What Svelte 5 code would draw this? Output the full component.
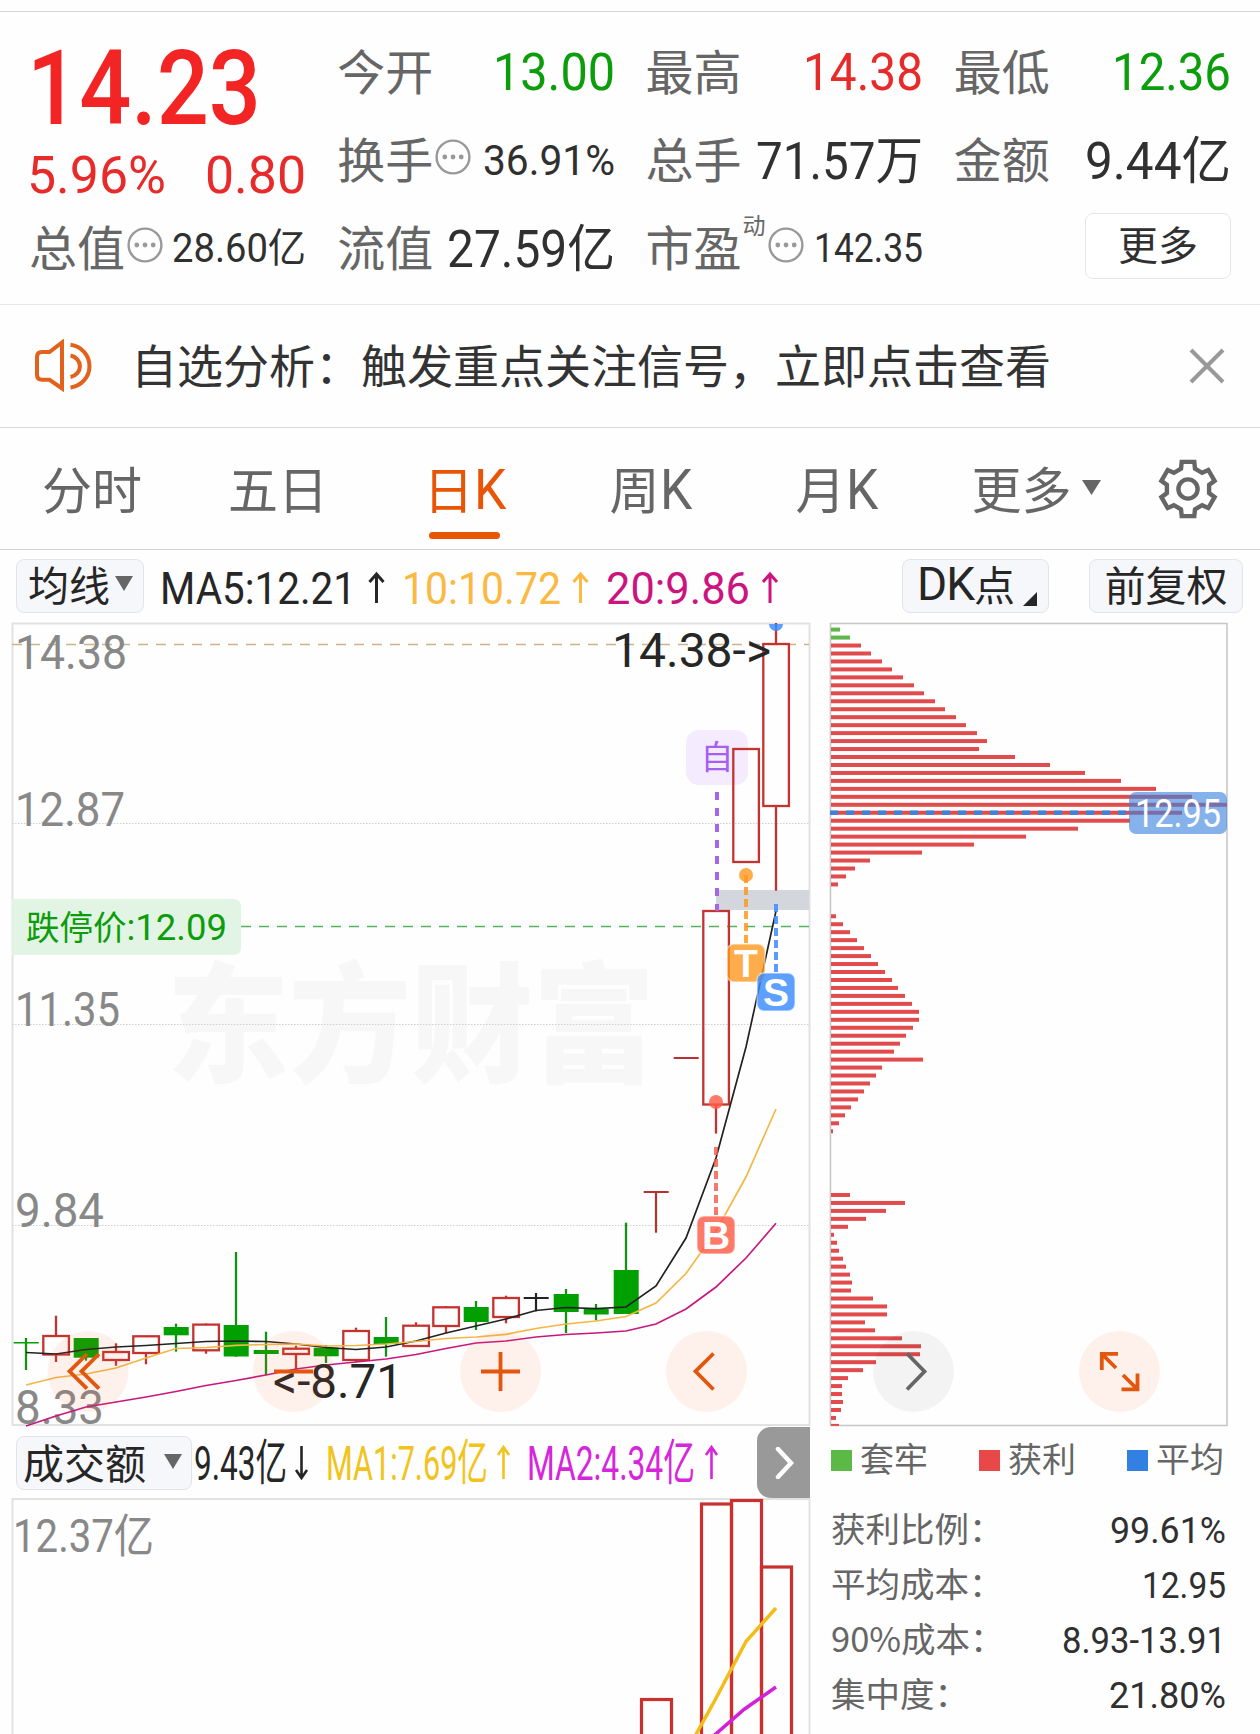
<script lang="ts">
	type Quote = {
		label: string;
		text: string;
		width: number;
		size: number;
		tone: string;
		tip?: boolean;
		sup?: string;
	};

	type Candle = { x: number; top: number; bottom: number; high: number; low: number; kind: string };

	const quotes: Quote[] = [
		{ label: '今开', text: '13.00', width: 122, size: 52, tone: 'down' },
		{ label: '最高', text: '14.38', width: 120, size: 52, tone: 'up' },
		{ label: '最低', text: '12.36', width: 119, size: 52, tone: 'down' },
		{ label: '换手', text: '36.91%', width: 132, size: 42, tone: 'flat', tip: true },
		{ label: '总手', text: '71.57万', width: 167, size: 51, tone: 'flat' },
		{ label: '金额', text: '9.44亿', width: 146, size: 51, tone: 'flat' },
		{ label: '总值', text: '28.60亿', width: 134, size: 40, tone: 'flat', tip: true },
		{ label: '流值', text: '27.59亿', width: 168, size: 51, tone: 'flat strong' },
		{ label: '市盈', text: '142.35', width: 109, size: 40, tone: 'flat', tip: true, sup: '动' }
	];

	const tabs = [
		{ text: '分时', k: '' },
		{ text: '五日', k: '' },
		{ text: '日', k: 'K', active: true },
		{ text: '周', k: 'K' },
		{ text: '月', k: 'K' }
	];

	const axis = [
		{ text: '14.38', y: 668.5, width: 112 },
		{ text: '12.87', y: 826, width: 110 },
		{ text: '11.35', y: 1025.5, width: 105 },
		{ text: '9.84', y: 1227, width: 89 },
		{ text: '8.33', y: 1423.5, width: 89 }
	];

	// x, body top, body bottom, high, low, kind
	const candles: Candle[] = (
		[
			[26, 1342, 1343.5, 1338, 1370, 'fall'],
			[56, 1336, 1354.5, 1315.7, 1362, 'rise'],
			[86, 1338, 1357.7, 1338, 1360.7, 'fall'],
			[116, 1352, 1360, 1343.3, 1365.7, 'rise'],
			[146, 1336.3, 1353, 1336, 1364.3, 'rise'],
			[176, 1327, 1335.3, 1323.7, 1351.7, 'fall'],
			[206, 1324.6, 1350.3, 1323.5, 1353.7, 'rise'],
			[236, 1325, 1356.5, 1252, 1356.7, 'fall'],
			[266, 1350, 1354, 1331.7, 1375, 'fall'],
			[296, 1348.7, 1354, 1345.7, 1370.7, 'rise'],
			[326, 1347.7, 1356.3, 1345, 1363, 'fall'],
			[356, 1331, 1360, 1327.7, 1362, 'rise'],
			[386, 1337, 1344, 1317, 1356.7, 'fall'],
			[416, 1325.7, 1346, 1322.3, 1346, 'rise'],
			[446, 1307.3, 1326, 1306, 1333, 'rise'],
			[476, 1307, 1322, 1301, 1330, 'fall'],
			[506, 1298, 1317, 1295.7, 1323.3, 'rise'],
			[536, 1297, 1299, 1293, 1311.3, 'even'],
			[566, 1294, 1312, 1289, 1333, 'fall'],
			[596, 1309, 1314.5, 1304, 1320.3, 'fall'],
			[626, 1270, 1314, 1222.7, 1314, 'fall'],
			[656, 1191, 1193, 1192, 1232.7, 'line'],
			[686, 1057, 1059, 1058, 1058, 'line'],
			[716, 911, 1104.5, 911, 1133.6, 'rise'],
			[746, 749, 862, 749, 862, 'rise'],
			[776, 644, 806, 623, 890.7, 'rise']
		] as [number, number, number, number, number, string][]
	).map(([x, top, bottom, high, low, kind]) => ({ x, top, bottom, high, low, kind }));

	const ma5 = [
		1352.5, 1354, 1349.5, 1347, 1345.5, 1343.5, 1341.5, 1341, 1341.5, 1344, 1347.5, 1349.5, 1347,
		1341, 1333, 1326, 1319, 1310.5, 1307.5, 1308.7, 1307, 1286, 1238, 1158, 1047, 911
	];
	const ma10 = [
		1385, 1377.5, 1374, 1368, 1358, 1348.5, 1347.5, 1345.3, 1344.5, 1344, 1346, 1345.5, 1344,
		1341.5, 1338.5, 1337, 1334.3, 1328.5, 1324, 1321, 1316.5, 1303, 1273.5, 1231, 1177, 1109
	];
	const ma20 = [
		1426, 1416, 1407, 1402, 1397, 1391.5, 1385.5, 1380.5, 1375, 1369, 1365, 1362, 1359, 1354.5,
		1348.5, 1343, 1341, 1337, 1334.5, 1333, 1331, 1324, 1309, 1287, 1258, 1223.3
	];

	// chip distribution, one bar per price level, top to bottom
	const chips = [
		9, 19, 30, 40, 51, 61, 72, 83, 93, 104, 114, 125, 135, 146, 156, 148, 184, 219, 254, 290, 325,
		361, 396, 351, 299, 247, 195, 143, 91, 39, 24, 15, 7, 0, 0, 0, 5, 12, 19, 26, 33, 40, 47, 54,
		61, 67, 74, 81, 88, 88, 82, 75, 69, 63, 92, 51, 45, 39, 33, 27, 20, 14, 8, 2, 0, 0, 0, 0, 0,
		0, 0, 19, 74, 55, 35, 17, 3, 6, 8, 12, 15, 19, 21, 20, 42, 56, 56, 34, 44, 71, 90, 89, 45, 32,
		17, 11, 11, 12, 10, 5, 8
	];

	const volumes = [
		{ x: 656, y: 1699.5 },
		{ x: 716, y: 1504 },
		{ x: 746, y: 1500.5 },
		{ x: 776, y: 1567 }
	];

	const legend = [
		{ text: '套牢', kind: 'stuck' },
		{ text: '获利', kind: 'profit' },
		{ text: '平均', kind: 'mean' }
	];

	const stats = [
		{ label: '获利比例：', text: '99.61%', width: 116 },
		{ label: '平均成本：', text: '12.95', width: 84 },
		{ label: '90%成本：', text: '8.93-13.91', width: 164 },
		{ label: '集中度：', text: '21.80%', width: 117 }
	];

	function trace(values: number[]) {
		return values.map((y, i) => `${26 + i * 30},${y}`).join(' ');
	}

	function gearPoints() {
		const out: string[] = [];
		for (let i = 0; i < 6; i++) {
			for (const [r, d] of [[21.5, -19], [27.8, -13], [27.8, 13], [21.5, 19]]) {
				const a = ((i * 60 - 90 + d) * Math.PI) / 180;
				out.push(`${(r * Math.cos(a)).toFixed(1)},${(r * Math.sin(a)).toFixed(1)}`);
			}
		}
		return out.join(' ');
	}
</script>

{#snippet figure(text: string, width: number, size: number, tone: string)}
	<svg class="figure {tone}" {width} height={size}>
		<text x="0" y={size * 0.855} font-size={size} textLength={width} lengthAdjust="spacingAndGlyphs">{text}</text>
	</svg>
{/snippet}

{#snippet quote(q: Quote)}
	<div class="quote">
		<span class="label">{q.label}</span>
		{#if q.sup}<span class="sup">{q.sup}</span>{/if}
		{#if q.tip}
			<svg class="tip" width="36" height="36" viewBox="0 0 36 36">
				<circle cx="18" cy="18" r="16.4" />
				<circle class="dot" cx="9.8" cy="18" r="2.4" />
				<circle class="dot" cx="18" cy="18" r="2.4" />
				<circle class="dot" cx="26.2" cy="18" r="2.4" />
			</svg>
		{/if}
		<span class="value">{@render figure(q.text, q.width, q.size, q.tone)}</span>
	</div>
{/snippet}

{#snippet badge(x: number, y: number, letter: string, kind: string)}
	<g class="badge {kind}">
		<rect x={x - 19} {y} width="38" height="38" rx="7" />
		<text {x} y={y + 32.5} text-anchor="middle">{letter}</text>
	</g>
{/snippet}

<main>
	<div class="strip"></div>

	<header>
		<div class="price">
			{@render figure('14.23', 234, 104, 'up big')}
			<div class="change">
				{@render figure('5.96%', 139, 52, 'up')}
				{@render figure('0.80', 101, 52, 'up')}
			</div>
		</div>
		{#each quotes as q}
			{@render quote(q)}
		{/each}
		<div class="quote more"><button>更多</button></div>
	</header>

	<div class="notice">
		<svg class="speaker" width="62" height="54" viewBox="33 338 62 54">
			<path d="M62 341.500V387.500L49.500 378.800H42Q37 378.800 37 373.500V356Q37 351 42 351H49.500Z" />
			<path d="M70.500 354.500A12 11 0 0 1 70.500 376M70.500 343.800A21.500 21.500 0 0 1 70.500 386.500" />
		</svg>
		<span class="message">自选分析：触发重点关注信号，立即点击查看</span>
		<svg class="close" width="36" height="36" viewBox="0 0 36 36">
			<path d="M2 2L34 34M34 2L2 34" />
		</svg>
	</div>

	<nav>
		{#each tabs as tab}
			<div class="tab" class:active={tab.active}>
				<span>{tab.text}{#if tab.k}<span class="k">{tab.k}</span>{/if}</span>
			</div>
		{/each}
		<div class="tab wide">
			<span>更多</span>
			<svg width="19" height="15"><path d="M0 0H19L9.500 15Z" /></svg>
		</div>
		<svg class="gear" width="62" height="62" viewBox="-31 -31 62 62">
			<polygon points={gearPoints()} />
			<circle r="9.6" />
		</svg>
	</nav>

	<div class="bar">
		<button class="chip-btn average">均线<svg width="18" height="15"><path d="M0 0H18L9 15Z" /></svg></button>
		<svg class="readout" width="640" height="56" viewBox="160 557 640 56">
			<g class="c-ma5">
				<text x="160" y="602.500" textLength="196" lengthAdjust="spacingAndGlyphs">MA5:12.21</text>
				<path d="M376.500 602V573M369.500 581L376.500 573L383.500 581" />
			</g>
			<g class="c-ma10">
				<text x="402" y="602.500" textLength="159" lengthAdjust="spacingAndGlyphs">10:10.72</text>
				<path d="M580.500 602V573M573.500 581L580.500 573L587.500 581" />
			</g>
			<g class="c-ma20">
				<text x="606" y="602.500" textLength="144" lengthAdjust="spacingAndGlyphs">20:9.86</text>
				<path d="M770 602V573M763 581L770 573L777 581" />
			</g>
		</svg>
		<button class="chip-btn dk"><span class="latin">DK</span>点<svg width="14" height="14"><path d="M14 0V14H0Z" /></svg></button>
		<button class="chip-btn adjust">前复权</button>
	</div>

	<section class="charts">
		<svg class="kline" width="820" height="805" viewBox="0 622 820 805">
			<rect class="frame" x="12.500" y="623.500" width="797" height="801.500" />
			<text class="watermark" x="167" y="1072" textLength="488" lengthAdjust="spacingAndGlyphs">东方财富</text>
			{#each [823.5, 1024.5, 1225.5] as y}
				<line class="grid" x1="12" x2="809" y1={y} y2={y} />
			{/each}
			<line class="top-line" x1="12" x2="809" y1="644.500" y2="644.500" />
			<rect class="gap" x="716" y="890" width="93" height="20" />
			<line class="limit-line" x1="241" x2="809" y1="926.500" y2="926.500" />
			<path class="limit-box" d="M12 899H233Q241 899 241 907V947Q241 955 233 955H12Z" />
			<text class="limit-text" x="26" y="940" textLength="201" lengthAdjust="spacingAndGlyphs"><tspan class="cn">跌停价</tspan>:12.09</text>

			{#each axis as a}
				<text class="axis" x="15" y={a.y} textLength={a.width} lengthAdjust="spacingAndGlyphs">{a.text}</text>
			{/each}

			<rect class="watch-box" x="686" y="730" width="62" height="55" rx="13" />
			<text class="watch" x="717" y="769" text-anchor="middle">自</text>

			{#each candles as c}
				<g class={c.kind}>
					{#if c.kind === 'rise'}
						<line x1={c.x} x2={c.x} y1={c.high} y2={c.top} />
						<line x1={c.x} x2={c.x} y1={c.bottom} y2={c.low} />
						<rect x={c.x - 12.7} y={c.top} width="25.600" height={c.bottom - c.top} />
					{:else}
						<line x1={c.x} x2={c.x} y1={c.high} y2={c.low} />
						<rect x={c.x - 12.3} y={c.top} width="25" height={c.bottom - c.top} />
					{/if}
				</g>
			{/each}

			<polyline class="ma ma5" points={trace(ma5)} />
			<polyline class="ma ma10" points={trace(ma10)} />
			<polyline class="ma ma20" points={trace(ma20)} />

			<line class="mark watch-line" x1="717" x2="717" y1="792" y2="911" />
			<path class="mark-s" d="M769 624A7 7 0 0 0 783 624Z" />
			<circle class="mark-t" cx="746" cy="875" r="7" />
			<line class="mark-t mark" x1="746" x2="746" y1="875" y2="943" />
			<line class="mark-s mark" x1="776" x2="776" y1="904" y2="972" />
			<circle class="mark-b" cx="716" cy="1102" r="7" />
			<line class="mark-b mark" x1="716" x2="716" y1="1147" y2="1215" />
			{@render badge(746, 944, 'T', 'mark-t')}
			{@render badge(776, 973, 'S', 'mark-s')}
			{@render badge(716, 1216, 'B', 'mark-b')}

			<text class="extreme" x="612" y="667" textLength="159" lengthAdjust="spacingAndGlyphs">14.38-&gt;</text>
			<text class="extreme" x="273" y="1398" textLength="130" lengthAdjust="spacingAndGlyphs">&lt;-8.71</text>
		</svg>

		<svg class="chips" width="440" height="805" viewBox="820 622 440 805">
			<rect class="chip-frame" x="830.500" y="623.500" width="396.500" height="802" />
			{#each chips as w, i}
				<rect class={i < 2 ? 'stuck' : 'profit'} x="831" y={627.6 + i * 7.963} width={w} height={i === 100 ? 2 : 4} />
			{/each}
			<line class="mean-line" x1="830" x2="1129" y1="812.700" y2="812.700" />
			<rect class="mean-box" x="1129" y="792" width="98" height="42" rx="7" />
			<text class="mean-text" x="1135" y="827" textLength="86" lengthAdjust="spacingAndGlyphs">12.95</text>
		</svg>

		<svg class="tools" width="1260" height="805" viewBox="0 622 1260 805">
			{#each [88, 293.5, 500.5, 706.5, 1119.5] as cx}
				<circle {cx} cy="1371.500" r="40.500" />
			{/each}
			<circle class="off" cx="913.500" cy="1371.500" r="40.500" />
			<path d="M87 1354L69.500 1371.300L87 1388.600M99 1354L81.500 1371.300L99 1388.600" />
			<path d="M274 1371.500H313M481 1371.500H520M500.500 1352V1391" />
			<path d="M713.500 1353.500L695.500 1371.300L713.500 1389.500" />
			<path class="off" d="M907 1353.500L924.500 1371.500L907 1389.500" />
			<path d="M1118 1353.800H1101.800V1370M1101.800 1353.800L1116 1368M1121.500 1389.300H1137.500V1373.500M1137.500 1389.300L1123 1375" />
		</svg>
	</section>

	<div class="lower">
		<section class="volume">
			<div class="vol-head">
				<button class="chip-btn amount">成交额<svg width="18" height="15"><path d="M0 0H18L9 15Z" /></svg></button>
				<svg class="readout vol" width="564" height="72" viewBox="193 1427 564 72">
					<g class="c-ma5">
						<text x="194" y="1480" textLength="93" lengthAdjust="spacingAndGlyphs">9.43亿</text>
						<path d="M301.500 1446V1478M296 1470L301.500 1478L307 1470" />
					</g>
					<g class="c-vol1">
						<text x="326" y="1480" textLength="162" lengthAdjust="spacingAndGlyphs">MA1:7.69亿</text>
						<path d="M503.500 1479V1447M498 1455L503.500 1447L509 1455" />
					</g>
					<g class="c-vol2">
						<text x="527" y="1480" textLength="168" lengthAdjust="spacingAndGlyphs">MA2:4.34亿</text>
						<path d="M711.500 1479V1447M706 1455L711.500 1447L717 1455" />
					</g>
				</svg>
				<button class="next"><svg width="20" height="32"><path d="M4 2L17 16L4 30" /></svg></button>
			</div>
			<svg class="vol-chart" width="820" height="236" viewBox="0 1498 820 236">
				<path class="frame" d="M12.500 1740V1499H809.500V1740" />
				<text class="axis vol-axis" x="13" y="1552" textLength="141" lengthAdjust="spacingAndGlyphs">12.37亿</text>
				{#each volumes as v}
					<rect class="vol-bar" x={v.x - 14.5} y={v.y} width="30" height="260" />
				{/each}
				<polyline class="v1" points="776,1608 746,1641.500 714,1702 694,1738" />
				<polyline class="v2" points="776,1687 744,1709.500 710,1739" />
			</svg>
		</section>

		<aside>
			<div class="legend">
				{#each legend as item}
					<span class="key"><i class={item.kind}></i><span>{item.text}</span></span>
				{/each}
			</div>
			{#each stats as s}
				<div class="stat">
					<span>{s.label}</span>
					{@render figure(s.text, s.width, 37, 'flat')}
				</div>
			{/each}
		</aside>
	</div>
</main>

<style>
	:global(body) {
		margin: 0;
		background: #fff;
	}

	main {
		width: 1260px;
		height: 1734px;
		overflow: hidden;
		background: #fefefe;
		color: #666;
		font-family: 'Noto Sans CJK SC', sans-serif;
	}

	main * {
		box-sizing: border-box;
	}

	svg {
		display: block;
		flex-shrink: 0;
	}

	text {
		font-family: Roboto, 'Noto Sans CJK SC', sans-serif;
	}

	button {
		padding: 0;
		font-family: inherit;
		line-height: 1;
	}

	.strip {
		height: 12px;
		border-bottom: 1px solid #d6d8d8;
	}

	header {
		display: grid;
		grid-template-columns: repeat(4, 1fr);
		grid-template-rows: repeat(3, 88px);
		column-gap: 31px;
		height: 293px;
		padding: 16px 29px 0 29px;
		border-bottom: 1px solid #e8e8e8;
	}

	.price {
		grid-row: span 2;
		padding-top: 7px;
		margin-left: -2px;
	}

	.change {
		display: flex;
		justify-content: space-between;
		margin-top: 10px;
	}

	.figure,
	.readout,
	.kline {
		overflow: visible;
	}

	.up {
		fill: #e72a2a;
	}

	.big {
		fill: #f32424;
		font-weight: 500;
	}

	.down {
		fill: #0b9d0b;
	}

	.flat {
		fill: #303030;
	}

	.quote {
		display: flex;
		align-items: center;
	}

	.label {
		padding-bottom: 5px;
		font-size: 48px;
		line-height: 83px;
	}

	.value {
		margin-left: auto;
	}

	.sup {
		align-self: flex-start;
		margin: 6px 0 0 1px;
		font-size: 23px;
		line-height: 28px;
	}

	.tip {
		margin: -6px 0 0 2px;
		fill: none;
		stroke: #999;
		stroke-width: 2.4;
	}

	.dot {
		fill: #999;
		stroke: none;
	}

	.more {
		justify-content: flex-end;
	}

	.more button {
		width: 146px;
		height: 66px;
		padding-bottom: 6px;
		margin-top: -4px;
		border: 1.5px solid #e6e6e8;
		border-radius: 8px;
		background: #fff;
		color: #303030;
		font-size: 40px;
	}

	.notice {
		display: flex;
		align-items: center;
		height: 123px;
		padding: 0 35px 0 33px;
		border-bottom: 1px solid #d8d8d8;
	}

	.speaker {
		fill: none;
		stroke: #e2611c;
		stroke-width: 4;
	}

	.message {
		padding-bottom: 6px;
		margin-left: 36px;
		color: #333;
		font-size: 46px;
		line-height: 60px;
		white-space: nowrap;
	}

	.close {
		margin-left: auto;
		stroke: #999;
		stroke-width: 4;
	}

	nav {
		display: flex;
		align-items: center;
		height: 122px;
		border-bottom: 1px solid #d4d4d4;
	}

	.tab {
		display: flex;
		align-items: center;
		justify-content: center;
		position: relative;
		width: 186px;
		height: 100%;
		padding: 0 2px 3px 0;
		font-size: 50px;
	}

	.tab .k {
		display: inline-block;
		font-family: Roboto, sans-serif;
		font-size: 56px;
		line-height: 1;
		transform: scaleX(0.92);
		transform-origin: left;
		margin-right: -5px;
		margin-left: 1px;
	}

	.tab.active {
		color: #e85505;
	}

	.tab.active::after {
		content: '';
		position: absolute;
		bottom: 10px;
		left: 57px;
		width: 71px;
		height: 7px;
		border-radius: 4px;
		background: #e85505;
	}

	.tab.wide {
		gap: 10px;
		width: 215px;
		padding-right: 3px;
	}

	.tab path,
	.chip-btn path {
		fill: #666;
	}

	.gear {
		margin-left: 12px;
		fill: none;
		stroke: #666;
		stroke-width: 4.4;
	}

	.bar {
		display: flex;
		align-items: center;
		height: 72px;
		padding: 0 16px 1px;
	}

	.chip-btn {
		display: flex;
		align-items: center;
		flex-shrink: 0;
		height: 54px;
		padding-bottom: 4px;
		border: 1.5px solid #e2e4e8;
		border-radius: 8px;
		background: #f6f7fa;
		color: #262626;
		font-size: 41px;
		white-space: nowrap;
	}

	.average {
		gap: 5px;
		width: 128px;
		padding-left: 11px;
	}

	.readout {
		margin-left: 16px;
		font-size: 44.5px;
	}

	.readout path {
		fill: none;
		stroke: currentColor;
		stroke-width: 3;
	}

	.readout text {
		fill: currentColor;
	}

	.c-ma5 {
		color: #262626;
	}

	.c-ma10 {
		color: #fbb941;
	}

	.c-ma20 {
		color: #cc1480;
	}

	.dk {
		width: 147px;
		margin-left: 102px;
		padding-left: 14px;
	}

	.dk .latin {
		font-family: Roboto, sans-serif;
		font-size: 46px;
		letter-spacing: -1px;
	}

	.dk svg {
		align-self: flex-end;
		margin: 0 0 2px 8px;
	}

	.dk path {
		fill: #262626;
	}

	.adjust {
		justify-content: center;
		width: 154px;
		margin-left: 40px;
	}

	.charts {
		display: flex;
		position: relative;
	}

	.frame {
		fill: none;
		stroke: #e2e2e2;
		stroke-width: 2;
	}

	.watermark {
		fill: #f7f7f7;
		font-size: 130px;
		font-weight: 900;
	}

	.grid {
		stroke: #d0d0d0;
		stroke-width: 1;
		stroke-dasharray: 1.5 1.5;
	}

	.top-line {
		stroke: #cdb38c;
		stroke-width: 1.5;
		stroke-dasharray: 10 8;
	}

	.limit-line {
		stroke: #55b55a;
		stroke-width: 1.6;
		stroke-dasharray: 10 8;
	}

	.gap {
		fill: #d3d7dd;
	}

	.limit-box {
		fill: #e2f4e3;
	}

	.limit-text {
		fill: #0c9c0c;
		font-size: 37px;
	}

	.limit-text .cn {
		font-size: 34px;
	}

	.axis {
		fill: #888;
		font-size: 48px;
	}

	.extreme {
		fill: #262626;
		font-size: 48px;
	}

	.watch-box {
		fill: #f5ebff;
	}

	.watch {
		fill: #a65ff0;
		font-size: 33px;
	}

	.rise {
		fill: none;
		stroke: #c53330;
		stroke-width: 2.3;
	}

	.fall {
		fill: #00a000;
		stroke: none;
	}

	.fall line {
		stroke: #129212;
		stroke-width: 2.3;
	}

	.line,
	.even {
		fill: #b83030;
	}

	.line line {
		stroke: #b83030;
		stroke-width: 2.2;
	}

	.even {
		fill: #222;
	}

	.even line {
		stroke: #222;
		stroke-width: 2.2;
	}

	.ma {
		fill: none;
		stroke-width: 1.7;
	}

	.ma5 {
		stroke: #222;
	}

	.ma10 {
		stroke: #f4b744;
	}

	.ma20 {
		stroke: #c8187f;
	}

	.mark {
		stroke-width: 4;
		stroke-dasharray: 8 4;
	}

	.watch-line {
		stroke: #a566e8;
		stroke-dasharray: 8 8;
	}

	.mark-t {
		fill: rgba(255, 153, 31, 0.8);
		stroke: none;
	}

	.mark-s {
		fill: rgba(59, 139, 255, 0.82);
	}

	.mark-b {
		fill: rgba(255, 92, 72, 0.82);
	}

	.mark-t.mark {
		stroke: rgba(255, 153, 31, 0.85);
	}

	.mark-s.mark {
		stroke: rgba(59, 139, 255, 0.85);
	}

	.mark-b.mark {
		stroke: rgba(245, 92, 72, 0.82);
	}

	.badge rect {
		stroke: rgba(255, 255, 255, 0.5);
		stroke-width: 1.5;
	}

	.badge text {
		fill: #fff;
		font-family: 'Liberation Sans', sans-serif;
		font-size: 39px;
		font-weight: 700;
	}

	.chip-frame {
		fill: none;
		stroke: #c8c8c8;
		stroke-width: 1.6;
	}

	.profit {
		fill: #e14b4b;
		background: #e84848;
	}

	.stuck {
		fill: #5db847;
		background: #5cb946;
	}

	.mean {
		background: #3380e3;
	}

	.mean-line {
		stroke: #4480d8;
		stroke-width: 4.5;
		stroke-dasharray: 8 8;
	}

	.mean-box {
		fill: rgba(59, 131, 222, 0.62);
	}

	.mean-text {
		fill: #fff;
		font-size: 38px;
	}

	.tools {
		position: absolute;
		inset: 0;
	}

	.tools circle {
		fill: rgba(255, 104, 32, 0.09);
	}

	.tools circle.off {
		fill: rgba(0, 0, 0, 0.045);
	}

	.tools path {
		fill: none;
		stroke: #e2560e;
		stroke-width: 3.8;
	}

	.tools path.off {
		stroke: #666;
	}

	.lower {
		display: flex;
	}

	.volume {
		width: 820px;
	}

	.vol-head {
		display: flex;
		height: 71px;
		padding-left: 16px;
	}

	.amount {
		gap: 18px;
		width: 176px;
		margin-top: 9px;
		padding-left: 6px;
	}

	.vol {
		margin-left: 1px;
		font-size: 49px;
	}

	.vol path {
		stroke-width: 2.6;
	}

	.c-vol1 {
		color: #f2c31c;
	}

	.c-vol2 {
		color: #d626dc;
	}

	.next {
		display: flex;
		align-items: center;
		justify-content: center;
		width: 53px;
		height: 71px;
		border: 0;
		border-radius: 14px 0 0 14px;
		background: #999;
	}

	.next path {
		fill: none;
		stroke: #fff;
		stroke-width: 4.5;
		stroke-linecap: round;
	}

	.vol-axis {
		font-size: 46px;
	}

	.vol-bar {
		fill: none;
		stroke: #c9302e;
		stroke-width: 3.2;
	}

	.v1,
	.v2 {
		fill: none;
		stroke: #f3bd17;
		stroke-width: 3.5;
	}

	.v2 {
		stroke: #d321da;
	}

	aside {
		width: 440px;
		padding: 6px 34px 0 11px;
		font-size: 34.5px;
	}

	.legend {
		display: flex;
		justify-content: space-between;
		height: 69px;
		padding-right: 2px;
	}

	.key {
		display: flex;
		align-items: center;
		gap: 8px;
		height: 54px;
		font-size: 34px;
	}

	.key span {
		padding-bottom: 5px;
	}

	.key i {
		width: 21px;
		height: 21px;
	}

	.stat {
		display: flex;
		align-items: center;
		justify-content: space-between;
		height: 55px;
		line-height: 51px;
	}

	.stat span {
		padding-bottom: 4px;
	}
</style>
